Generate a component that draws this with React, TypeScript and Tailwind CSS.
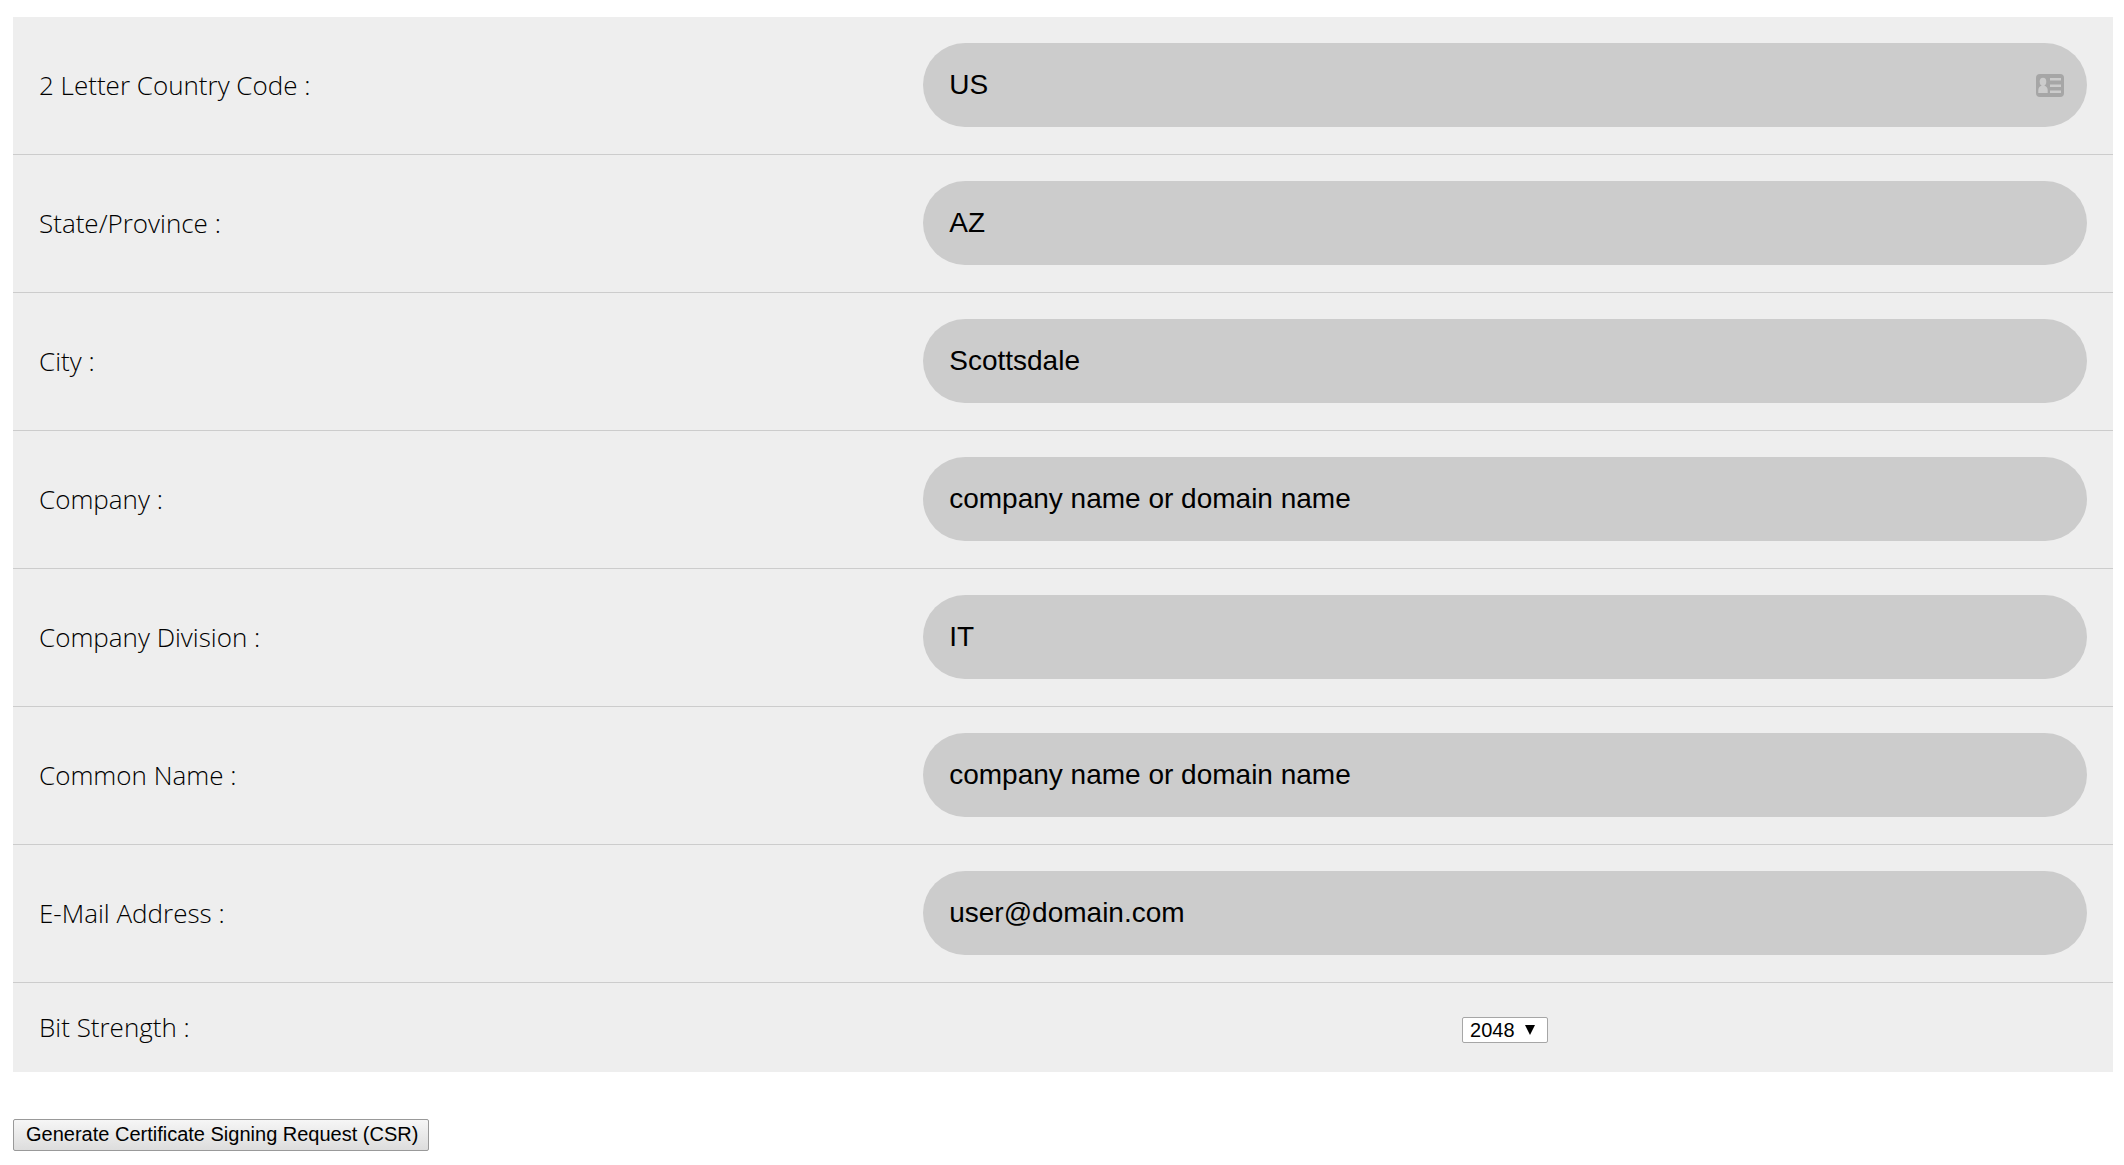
import React, { useState } from "react";

const fields = [
  { id: "country", label: "2 Letter Country Code :", value: "US" },
  { id: "state", label: "State/Province :", value: "AZ" },
  { id: "city", label: "City :", value: "Scottsdale" },
  { id: "company", label: "Company :", value: "company name or domain name" },
  { id: "division", label: "Company Division :", value: "IT" },
  { id: "commonName", label: "Common Name :", value: "company name or domain name" },
  { id: "email", label: "E-Mail Address :", value: "user@domain.com" },
];

const labelClass =
  "px-[26px] pb-0.5 font-['Open_Sans',sans-serif] text-[26px] leading-[34px] font-light text-black";

function ContactCardIcon() {
  return (
    <svg
      className="pointer-events-none absolute top-[31px] right-[23px] h-[23px] w-7"
      viewBox="0 0 28 23"
      aria-hidden="true"
    >
      <rect width="28" height="23" rx="4" fill="#a6a6a6" />
      <g fill="#cccccc">
        <ellipse cx="7" cy="7.7" rx="3.3" ry="3.9" />
        <path d="M2.3 19v-2.6c0-2.4 1-4 3-4.6l.7-1h2l.7 1c2 .6 3 2.2 3 4.6V19z" />
        <rect x="14" y="4" width="11" height="2.5" />
        <rect x="14" y="10.5" width="11" height="2.5" />
        <rect x="14" y="16.5" width="11" height="2.5" />
      </g>
    </svg>
  );
}

function App() {
  const [values, setValues] = useState<Record<string, string>>(
    Object.fromEntries(fields.map((f) => [f.id, f.value]))
  );
  const [bits, setBits] = useState("2048");

  const handleChange = (id: string, value: string) => {
    setValues({ ...values, [id]: value });
  };

  return (
    <div className="min-h-screen bg-white pt-[17px] pr-[11px] pb-3 pl-[13px]">
      <form onSubmit={(e) => e.preventDefault()}>
        <div className="bg-[#eeeeee]">
          {fields.map((field) => (
            <div
              key={field.id}
              className="grid grid-cols-[8fr_11fr] items-center border-b border-[#cccccc]"
            >
              <label htmlFor={field.id} className={labelClass}>
                {field.label}
              </label>
              <div className="px-[26px] pt-[26px] pb-[27px]">
                <div className="relative">
                  <input
                    id={field.id}
                    type="text"
                    value={values[field.id]}
                    onChange={(e) => handleChange(field.id, e.target.value)}
                    className="block h-[84px] w-full rounded-full bg-[#cccccc] px-[26px] font-['Liberation_Sans',Arial,sans-serif] text-[28px] text-black outline-none"
                  />
                  {field.id === "country" && <ContactCardIcon />}
                </div>
              </div>
            </div>
          ))}
          <div className="grid grid-cols-[8fr_11fr] items-baseline pt-[27px] pb-[26px]">
            <label htmlFor="bits" className={labelClass}>
              Bit Strength :
            </label>
            <div className="flex justify-center px-[26px]">
              <div className="relative">
                <select
                  id="bits"
                  value={bits}
                  onChange={(e) => setBits(e.target.value)}
                  className="h-[26px] w-[86px] appearance-none rounded-xs border border-[#a6a6a6] bg-white pl-[7px] font-['Liberation_Sans',Arial,sans-serif] text-xl leading-6 text-black"
                >
                  <option value="2048">2048</option>
                  <option value="4096">4096</option>
                </select>
                <svg
                  className="pointer-events-none absolute top-2 right-[13px] h-[10px] w-[10px]"
                  viewBox="0 0 10 10"
                  aria-hidden="true"
                >
                  <path d="M0 0h10L5 10z" />
                </svg>
              </div>
            </div>
          </div>
        </div>
        <button
          type="submit"
          className="mt-[47px] h-8 rounded-xs border border-[#999999] bg-linear-to-b from-[#f6f6f6] to-[#dddddd] pr-2.5 pb-0.5 pl-3 font-['Liberation_Sans',Arial,sans-serif] text-xl leading-7 text-black"
        >
          Generate Certificate Signing Request (CSR)
        </button>
      </form>
    </div>
  );
}

export default App;
